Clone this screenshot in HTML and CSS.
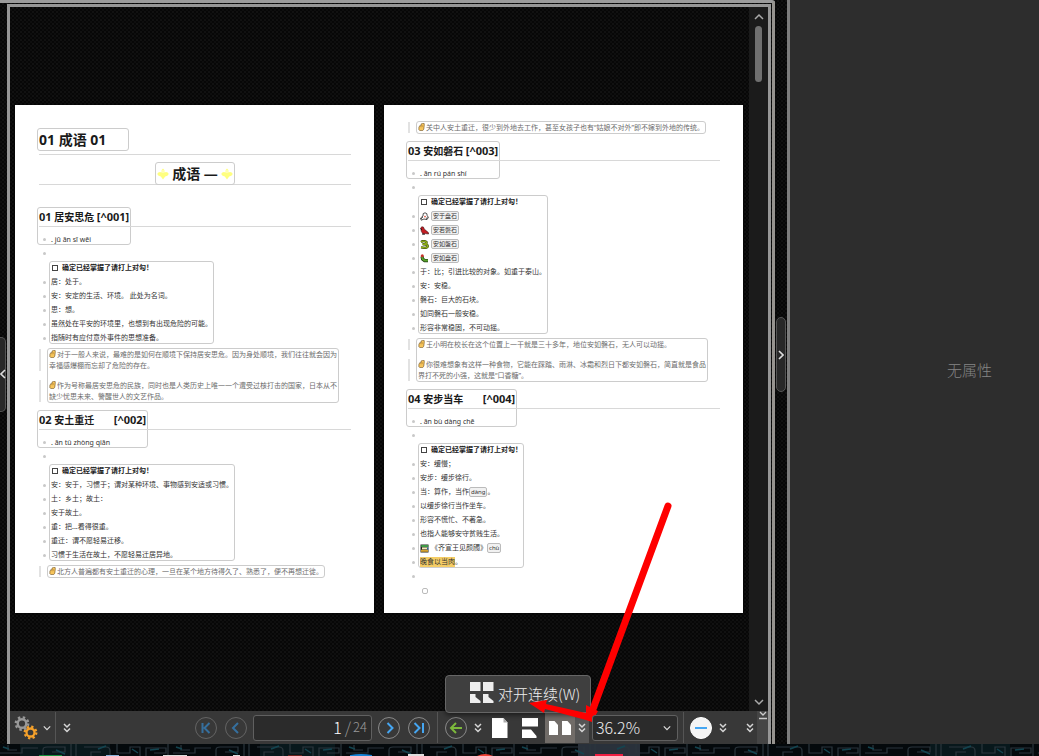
FILE: index.html
```html
<!DOCTYPE html>
<html lang="zh-CN">
<head>
<meta charset="utf-8">
<title>01 成语 01</title>
<link rel="stylesheet" href="styles.css">
</head>
<body>
<svg class="defs" aria-hidden="true">
  <symbol id="hand" viewBox="0 0 8 9"><path d="M1 5 2 3 3.200 3.400 3.600 1 5 .4H7L7.200 2 6.600 7 5.400 8.600H2L1 7.600Z" fill="#f7c55c" stroke="#6b4d20" stroke-width=".7"/><path d="M3.800 2.600 3.600 5M5.200 2.400 5 4.600" stroke="#a8772c" stroke-width=".5"/></symbol>
  <symbol id="dove" viewBox="0 0 9 9"><path d="M3 4Q2.400.8 5 .8 7.400 1 7.200 3.600L8.400 5.400 7 7.600 4 7 1.200 8.200.6 6Z" fill="#fff" stroke="#222" stroke-width=".8"/><circle cx="5" cy="4.600" r=".9" fill="#d54"/><path d="M1 7l2-2M6.400 7l1-2" stroke="#222" stroke-width=".7"/></symbol>
  <symbol id="parrot" viewBox="0 0 9 9"><path d="M.6 2Q1.600.2 3.400 1L4.200 3 8.400 6.600 8.600 8 5.400 7.600 3 8 1.400 5.600Z" fill="#c41c22" stroke="#35141a" stroke-width=".6"/><path d="M1 2.400 1.800 4M2 8.200H5" stroke="#111" stroke-width=".8"/></symbol>
  <symbol id="snake" viewBox="0 0 9 9"><path d="M1 2Q4 .2 6.400 2 7 4 4.400 4.200L2.600 4.400Q5 3.800 7.400 5.200 8.600 7.600 5 7.900L1 7.400" fill="none" stroke="#31430b" stroke-width="2.400"/><path d="M1 2Q4 .2 6.400 2 7 4 4.400 4.200L2.600 4.400Q5 3.800 7.400 5.200 8.600 7.600 5 7.900L1 7.400" fill="none" stroke="#8fae17" stroke-width="1.400"/></symbol>
  <symbol id="bug" viewBox="0 0 9 9"><path d="M2 2.400 2.600 5 4.600 6.600H8" fill="none" stroke="#1c3611" stroke-width="3.200"/><path d="M2 2.400 2.600 5 4.600 6.600H8" fill="none" stroke="#58a12c" stroke-width="2"/><circle cx="2.300" cy="1.800" r="1.500" fill="#c8322b"/></symbol>
  <symbol id="books" viewBox="0 0 9 9"><path d="M.5.5h8v8h-8z" fill="#222"/><path d="M1.200 1h7v2h-7z" fill="#3f9b46"/><path d="M2 3.400h6.400v2H2z" fill="#f4e9b8"/><path d="M1 5.800h7v2H1z" fill="#d7a32f"/><path d="M7 3.400h1.400v2H7z" fill="#2b66a8"/></symbol>
  <symbol id="spark" viewBox="0 0 12 12"><path d="M6 .5Q8 1.800 7.400 4.400 10.600 3.400 11.800 6 10.800 8.200 8.200 8.600L6 11.600 3.800 8.600Q1.200 8.200.2 6 1.400 3.400 4.600 4.400 4 1.800 6 .5Z" fill="#ffff80"/><path d="M6 2V5" stroke="#fff" stroke-width=".8"/></symbol>
  <symbol id="dchev" viewBox="0 0 8 10"><path d="M1 1l3 3 3-3M1 5.500l3 3 3-3" fill="none" stroke="#d6d6d6" stroke-width="1.500"/></symbol>
  <symbol id="chev" viewBox="0 0 10 10"><path d="M1 3l4 4 4-4" fill="none" stroke="currentColor" stroke-width="1.500"/></symbol>
</svg>

<div class="screen">
  <div class="app">
    <div class="dock">
      <div class="gutter"><button class="handle left" aria-label="展开左侧面板"><svg viewBox="0 0 6 10"><path d="M5 1 1 5l4 4" fill="none" stroke="#ddd" stroke-width="1.600"/></svg></button></div>
      <main class="viewer">
        <div class="view">
          <div class="canvas">
            <article class="page first">
              <header class="title"><h1 class="frame">01 成语 01</h1></header>
              <div class="subtitle"><h2 class="frame"><svg><use href="#spark"/></svg>成语 —<svg><use href="#spark"/></svg></h2></div>
              <section>
                <div class="head big"><div class="frame"><h3><span>01</span> 居安思危 <span>[^001]</span></h3><p class="pinyin">. jū ān sī wēi</p></div></div>
                <div class="blank"></div>
                <div class="frame box">
                  <label class="check"><input type="checkbox">确定已经掌握了请打上对勾！</label>
                  <ul><li>居：处于。</li><li>安：安定的生活、环境。 此处为名词。</li><li>思：想。</li><li>虽然处在平安的环境里，也想到有出现危险的可能。</li><li>指随时有应付意外事件的思想准备。</li></ul>
                </div>
                <blockquote class="frame">
                  <p><svg><use href="#hand"/></svg>对于一般人来说，最难的是如何在顺境下保持居安思危。因为身处顺境，我们往往就会因为<br>幸福感爆棚而忘却了危险的存在。</p>
                  <p><svg><use href="#hand"/></svg>作为号称最居安思危的民族，同时也是人类历史上唯一一个遭受过核打击的国家，日本从不<br>缺少忧思未来、警醒世人的文艺作品。</p>
                </blockquote>
              </section>
              <section>
                <div class="head"><div class="frame"><h3><span>02</span> 安土重迁 <span class="far">[^002]</span></h3><p class="pinyin">. ān tǔ zhòng qiān</p></div></div>
                <div class="blank"></div>
                <div class="frame box">
                  <label class="check"><input type="checkbox">确定已经掌握了请打上对勾！</label>
                  <ul><li>安：安于，习惯于；谓对某种环境、事物感到安适或习惯。</li><li>土：乡土；故土：</li><li>安于故土。</li><li>重：把...看得很重。</li><li>重迁：谓不愿轻易迁移。</li><li>习惯于生活在故土，不愿轻易迁居异地。</li></ul>
                </div>
                <blockquote class="frame"><p><svg><use href="#hand"/></svg>北方人普遍都有安土重迁的心理，一旦在某个地方待得久了、熟悉了，便不再想迁徙。</p></blockquote>
              </section>
            </article>
            <article class="page">
              <blockquote class="frame top"><p><svg><use href="#hand"/></svg>关中人安土重迁，很少到外地去工作，甚至女孩子也有“姑娘不对外”即不嫁到外地的传统。</p></blockquote>
              <section>
                <div class="head"><div class="frame"><h3><span>03</span> 安如磐石 <span>[^003]</span></h3><p class="pinyin">. ān rú pán shí</p></div></div>
                <div class="blank"></div>
                <div class="frame box">
                  <label class="check"><input type="checkbox">确定已经掌握了请打上对勾！</label>
                  <ul><li><svg><use href="#dove"/></svg><kbd>安于盘石</kbd></li><li><svg><use href="#parrot"/></svg><kbd>安若磐石</kbd></li><li><svg><use href="#snake"/></svg><kbd>安如盤石</kbd></li><li><svg><use href="#bug"/></svg><kbd>安如盘石</kbd></li><li>于：比；引进比较的对象。如重于泰山。</li><li>安：安稳。</li><li>磐石：巨大的石块。</li><li>如同磐石一般安稳。</li><li>形容非常稳固，不可动摇。</li></ul>
                </div>
                <blockquote class="frame">
                  <p><svg><use href="#hand"/></svg>王小明在校长在这个位置上一干就是三十多年，地位安如磐石，无人可以动摇。</p>
                  <p><svg><use href="#hand"/></svg>你很难想象有这样一种食物，它能在踩踏、雨淋、冰霜和烈日下都安如磐石，简直就是食品<br>界打不死的小强，这就是“口香糖”。</p>
                </blockquote>
              </section>
              <section>
                <div class="head"><div class="frame"><h3><span>04</span> 安步当车 <span class="far">[^004]</span></h3><p class="pinyin">. ān bù dàng chē</p></div></div>
                <div class="blank"></div>
                <div class="frame box">
                  <label class="check"><input type="checkbox">确定已经掌握了请打上对勾！</label>
                  <ul><li>安：缓慢；</li><li>安步：缓步徐行。</li><li>当：算作，当作<kbd>dàng</kbd>。</li><li>以缓步徐行当作坐车。</li><li>形容不慌忙、不著急。</li><li>也指人能够安守贫贱生活。</li><li><svg><use href="#books"/></svg>《齐宣王见颜斶》<kbd>chù</kbd></li><li><mark>晚食以当肉</mark>。</li></ul>
                </div>
                <div class="blank"></div>
                <div class="blank nested"></div>
              </section>
            </article>
          </div>
          <div class="scrollbar">
            <button aria-label="向上滚动"><svg class="flip"><use href="#chev"/></svg></button>
            <div class="thumb"></div>
            <button class="down" aria-label="向下滚动"><svg><use href="#chev"/></svg></button>
          </div>
        </div>
        <div class="toolbar">
          <button class="gear" aria-label="选项"><svg viewBox="0 0 24 26"><g fill="none"><circle cx="8" cy="8.500" r="4.300" stroke="#989898" stroke-width="2.400"/><circle cx="8" cy="8.500" r="6.200" stroke="#989898" stroke-width="2.400" stroke-dasharray="2.400 2.470"/><circle cx="16.500" cy="17.500" r="4" stroke="#f5a12b" stroke-width="2.300"/><circle cx="16.500" cy="17.500" r="5.800" stroke="#f5a12b" stroke-width="2.300" stroke-dasharray="2.250 2.305"/></g></svg></button>
          <button class="slim" aria-label="选项菜单"><svg class="small"><use href="#chev"/></svg></button>
          <i class="sep"></i>
          <button class="slim more" aria-label="更多"><svg><use href="#dchev"/></svg></button>
          <span class="spacer"></span>
          <button class="round dim" aria-label="首页"><svg viewBox="0 0 24 24"><circle cx="12" cy="12" r="10.500"/><path d="M8.500 7v10M15.500 7l-5 5 5 5"/></svg></button>
          <button class="round dim" aria-label="上一页"><svg viewBox="0 0 24 24"><circle cx="12" cy="12" r="10.500"/><path d="M14 7l-5 5 5 5"/></svg></button>
          <label class="pageno"><input type="text" value="1" aria-label="页码"><i>/</i><span>24</span></label>
          <button class="round" aria-label="下一页"><svg viewBox="0 0 24 24"><circle cx="12" cy="12" r="10.500"/><path d="M10.500 7l5 5-5 5"/></svg></button>
          <button class="round" aria-label="末页"><svg viewBox="0 0 24 24"><circle cx="12" cy="12" r="10.500"/><path d="M7.500 7l5 5-5 5M16 7v10"/></svg></button>
          <i class="sep wide"></i>
          <button class="round back" aria-label="后退"><svg viewBox="0 0 24 24"><circle cx="12" cy="12" r="10.500"/><path d="M18 12H7M12 7l-5 5 5 5"/></svg></button>
          <button class="slim" aria-label="历史"><svg><use href="#dchev"/></svg></button>
          <button class="mode" aria-label="单页"><svg viewBox="0 0 18 22"><path d="M1 1h11.500l4 4.500V21H1z" fill="#fff"/><path d="M12.500 1v4.500h4z" fill="#aaa"/></svg></button>
          <button class="mode" aria-label="连续"><svg viewBox="0 0 18 22"><path d="M1 1h16v8.500H1zM1 12.500h9l5.500 6.500V21H1z" fill="#fff"/></svg></button>
          <div class="split">
            <button class="mode" aria-label="对开"><svg class="broad" viewBox="0 0 24 16"><path d="M1 1h5.500l3.500 4v10H1zM14 1h5.500l3.500 4v10h-9z" fill="#fff"/></svg></button>
            <button class="slim lit" aria-label="页面布局"><svg><use href="#dchev"/></svg></button>
            <div class="popup" role="menu"><button role="menuitem"><svg viewBox="0 0 24 22"><path d="M0 0h10.500v9H0zM13 0h10.500v9H13zM0 12h5.500v3l5 4v2H0zM13 12h5.500v3l5 4v2H13z" fill="#eee"/></svg>对开连续(W)</button></div>
            <svg class="arrow" viewBox="0 0 150 225" aria-hidden="true"><path d="M143 6 68 209" stroke="#f00" stroke-width="7" stroke-linecap="round"/><path d="M61 205 73 211 67 222 61 220 20 209 19 213 4 203 22 200 21 204 61 213Z" fill="#f00"/></svg>
          </div>
          <div class="zoom"><select aria-label="缩放"><option>36.2%</option></select><svg><use href="#chev"/></svg></div>
          <i class="sep end"></i>
          <button class="round minus" aria-label="缩小"><svg viewBox="0 0 24 24"><circle cx="12" cy="12" r="10.500"/><path d="M6 12h12"/></svg></button>
          <button class="slim" aria-label="更多缩放"><svg><use href="#dchev"/></svg></button>
          <button class="slim last" aria-label="更多工具"><svg><use href="#dchev"/></svg></button>
          <button class="tail" aria-label="收起工具栏"><svg viewBox="0 0 8 9"><path d="M1 1l3 3 3-3M0 7.500h8" fill="none" stroke="#ccc" stroke-width="1.300"/></svg></button>
        </div>
      </main>
    </div>
    <div class="splitter"><button class="handle" aria-label="收起属性面板"><svg viewBox="0 0 6 10"><path d="M1 1l4 4-4 4" fill="none" stroke="#ddd" stroke-width="1.600"/></svg></button></div>
    <aside class="panel">无属性</aside>
  </div>
  <div class="desktop"><svg viewBox="0 0 1039 12" preserveAspectRatio="xMidYMid slice" aria-hidden="true">
    <defs><pattern id="maze" width="173" height="12" patternUnits="userSpaceOnUse"><path d="M0 9h22V4h16M8 1v5h9M43 12V6q0-3 4-3h18v5H52M71 0v12M76 0v12M84 3h22q4 0 4 4v5M91 12V8h10M117 0v9h13V3h10v9M146 12V4h20v5h-12M168 0v12" fill="none" stroke="#29343b" stroke-width="1.200"/><path d="M3 3l6 2M56 6l9 4M98 5l8-3M132 5l6 4M150 6l9-1" stroke="#124450" stroke-width="1.500"/></pattern></defs>
    <path d="M0 0h1039v12H0z" fill="#04090c"/><path d="M20 0h90v12H20zM260 0h75v12h-75zM930 0h80v12h-80z" fill="#08181c"/><path d="M578 0h62v12h-62z" fill="#29313b"/><path d="M0 0h1039v12H0z" fill="url(#maze)"/>
    <path d="M39 11h23v1H39z" fill="#16913c"/><path d="M106 11h13v1h-13z" fill="#8bb4dc"/><path d="M163 11h24v1h-24zM233 11h7v1h-7zM408 10h16v2h-16z" fill="#ddd"/><path d="M350 11q11-2 22 0v1h-22z" fill="#1684d8"/><path d="M477 12q8-4 16 0z" fill="#ed4237"/><path d="M288 11h14v1h-14z" fill="#6a201c"/><path d="M595 10h28v2h-28z" fill="#ef1e42"/>
  </svg></div>
</div>
</body>
</html>
```
FILE: styles.css
```css
* { box-sizing: border-box; }
body, h1, h2, h3, p, ul, blockquote { margin: 0; padding: 0; }
body { background: #000; font-family: "Noto Sans", "Noto Sans CJK SC", sans-serif; }
button, input, select { font: inherit; color: inherit; background: none; border: 0; padding: 0; margin: 0; }
svg { display: block; flex: none; }
.defs { position: absolute; width: 0; height: 0; }

.screen { display: flex; flex-direction: column; min-height: 100vh; }
.app { flex: 1; display: flex; }
.dock, .splitter, .canvas {
  background: conic-gradient(#111 25%, #070707 0 50%, #0e0e0e 0 75%, #070707 0) 0 0 / 4px 4px;
}
.dock { flex: 1; display: flex; min-width: 0; border-top: 3px solid #9b9b9b; border-right: 3px solid #96938f; border-radius: 0 3px 0 0; padding: 1px 1px 0 0; }
.gutter { width: 7px; display: flex; align-items: center; }
.handle { width: 10px; height: 75px; display: flex; align-items: center; justify-content: center; background: #282828; border: 1px solid #555; border-radius: 5px; }
.handle.left { width: 6px; border-left: 0; border-radius: 0 5px 5px 0; }
.handle svg { width: 6px; height: 10px; }
.viewer { flex: 1; min-width: 0; display: flex; flex-direction: column; border: 3px solid #969696; border-bottom: 0; }
.view { flex: 1; display: flex; }
.canvas { flex: 1; display: flex; align-items: center; gap: 10px; padding: 0 6px 0 5px; }
.scrollbar { width: 19px; display: flex; flex-direction: column; align-items: center; background: #1b1b1b; color: #aaa; padding: 5px 0 4px; }
.scrollbar svg { width: 10px; height: 10px; }
.flip { transform: rotate(180deg); }
.thumb { width: 7px; height: 56px; margin-top: 4px; border-radius: 4px; background: #707070; }
.down { margin-top: auto; }

.splitter { width: 12px; display: flex; align-items: center; justify-content: center; padding-bottom: 35px; }
.panel { width: 252px; display: flex; align-items: center; border-left: 3px solid #7c7c7c; background: #2d2d2d; color: #858585; font-size: 15px; font-family: "Noto Sans CJK SC", sans-serif; font-weight: 300; padding: 0 0 6px 157px; }

.page { flex: 1; min-width: 0; align-self: center; aspect-ratio: 359 / 508; background: #fff; color: #333; padding: 16px 23px 0 24px; font-size: 7px; line-height: 14px; white-space: nowrap; box-shadow: 0 0 4px #000; }
.page.first { padding-top: 23px; }
.frame { width: fit-content; border: 1px solid #ccc; border-radius: 3px; }
.title { height: 27px; border-bottom: 1px solid #d8d8d8; }
.title .frame { width: 92px; margin-left: -2px; padding-left: 1px; }
h1, h2 { color: #1a1a1a; font-size: 14px; line-height: 21px; font-weight: 700; }
.subtitle { height: 23px; margin-top: 7px; border-bottom: 1px solid #d8d8d8; display: flex; justify-content: center; }
.subtitle .frame { display: flex; align-items: center; gap: 3px; height: 23px; padding: 0 1px; }
.subtitle svg { width: 12px; height: 12px; }
.head { position: relative; margin-top: 7px; }
.head.big { margin-top: 22px; }
.head::after { content: ""; position: absolute; left: 0; right: 0; top: 19px; height: 1px; background: #d8d8d8; }
.head .frame { height: 38px; margin-left: -2px; padding: 0 1px; }
h3 { color: #1a1a1a; font-size: 10px; line-height: 18px; font-weight: 700; }
h3 span { font-size: 11px; }
h3 .far { margin-left: 17px; }
.pinyin { margin: 7px 0 0 12px; line-height: 14px; }
.pinyin::before, li::before, .blank::before { content: ""; display: inline-block; flex: none; width: 3px; height: 3px; border-radius: 2px; background: #c8c8c8; margin: 0 5px 0 -8px; vertical-align: 1px; }
.blank { display: flex; align-items: center; height: 16px; }
.blank::before { margin: 0 0 0 4px; }
.blank.nested { height: 14px; }
.blank.nested::before { margin-left: 14px; width: 4px; height: 4px; border: 1px solid #bbb; background: none; }
.box { margin-left: 10px; padding: 0 1px; }
.check { display: flex; align-items: center; height: 12px; font-weight: 700; color: #222; }
.check input { appearance: none; width: 6px; height: 6px; border: 1px solid #444; margin: 0 4px 0 1px; }
ul { list-style: none; margin: 1px 0 -2px; }
li { display: flex; align-items: center; height: 14px; }
li svg { width: 9px; height: 9px; margin-right: 2px; }
kbd { font-family: inherit; font-size: 6px; line-height: 8px; padding: 0 1px; border: 1px solid #bbb; border-radius: 2px; background: #f1f1f1; }
mark { background: #f5cd65; color: inherit; line-height: 10px; }
blockquote { margin: 4px 0 0 8px; padding: 0 1px; line-height: 11px; color: #6c6c6c; }
blockquote.top { margin-top: 0; }
blockquote p { position: relative; }
blockquote p + p { margin-top: 9px; }
blockquote p::before { content: ""; position: absolute; left: -10px; top: 0; bottom: 0; width: 2px; background: #e2e2e2; }
blockquote svg { display: inline-block; width: 7px; height: 8px; margin-right: 1px; vertical-align: -1px; }

.toolbar { display: flex; align-items: center; height: 33px; padding-left: 4px; background: #383838; color: #ddd; }
.toolbar button { display: flex; align-items: center; justify-content: center; flex: none; }
.gear svg { width: 24px; height: 26px; }
.slim { width: 14px; height: 33px; }
.slim svg { width: 8px; height: 10px; }
.gear + .slim { margin: 0 1px 0 2px; }
.sep { width: 1px; height: 31px; background: #555; }
.sep.wide { margin: 0 3px; }
.sep.end { margin: 0 2px 0 5px; }
.more { margin-left: 4px; }
.spacer { flex: 1; }
.round { width: 30px; height: 33px; }
.round svg { width: 24px; height: 24px; fill: none; stroke: #45a6f2; stroke-width: 2; }
.round circle { stroke: #898989; stroke-width: 1; }
.round.dim svg { stroke: #356f9e; }
.round.dim circle { stroke: #646464; }
.round.back svg { stroke: #7cb83c; }
.round.minus circle { fill: #f4f4f4; stroke: #fff; }
.pageno, .zoom { display: flex; align-items: center; height: 26px; border: 1px solid #606060; border-radius: 3px; background: #2b2b2b; font-size: 16px; font-family: "Noto Sans CJK SC", sans-serif; font-weight: 300; line-height: 20px; }
.pageno { width: 119px; margin: 0 2px; padding: 0 4px 2px 0; }
.pageno input { flex: 1; min-width: 0; text-align: right; color: #fff; }
.pageno i { font-style: normal; color: #999; margin: 0 2px 0 3px; }
.pageno span { font-size: 13px; color: #999; }
.mode { width: 30px; height: 31px; }
.mode svg { width: 18px; height: 22px; }
.mode svg.broad { width: 24px; height: 16px; }
.split { position: relative; display: flex; align-items: center; }
.split .mode { background: #716c68; }
.slim.lit { height: 31px; background: #555; }
.popup { position: absolute; right: -2px; bottom: 30px; width: 146px; height: 38px; border: 1px solid #666; border-radius: 4px; background: #3f3f3f; box-shadow: 0 2px 5px #0008; }
.popup button { width: 100%; height: 36px; justify-content: flex-start; gap: 4px; padding: 0 0 2px 24px; color: #eee; font-family: "Noto Sans CJK SC", sans-serif; font-size: 15px; font-weight: 300; white-space: nowrap; }
.popup svg { width: 24px; height: 22px; }
.arrow { position: absolute; left: -20px; bottom: 18px; width: 150px; height: 225px; pointer-events: none; }
.zoom { position: relative; width: 86px; margin-left: 3px; }
.zoom select { appearance: none; width: 100%; height: 24px; padding: 0 0 2px 3px; color: #eee; }
.zoom svg { position: absolute; right: 6px; width: 8px; height: 8px; pointer-events: none; }
.last { margin-left: 13px; }
.tail { width: 11px; align-self: stretch; background: #454545; }
.toolbar .tail { align-items: flex-start; }
.tail svg { width: 8px; height: 9px; }
.desktop { height: 12px; background: #04090c; }
.desktop svg { width: 100%; height: 12px; }
```
